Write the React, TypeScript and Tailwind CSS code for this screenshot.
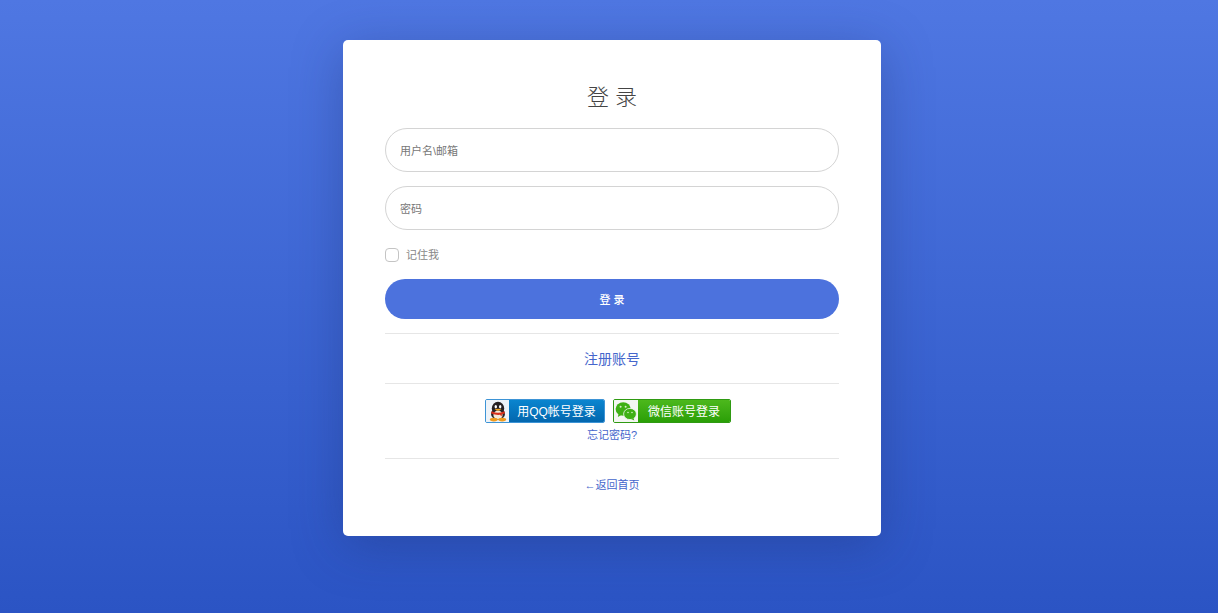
const cjk = "font-['Liberation_Sans','Noto_Sans_CJK_SC',sans-serif]";

function QQIcon() {
  return (
    <svg width="22" height="21" viewBox="0 0 22 21">
      <ellipse cx="11" cy="7.5" rx="6.2" ry="6.8" fill="#262022" />
      <ellipse cx="11" cy="13" rx="7" ry="5.8" fill="#2a2426" />
      <ellipse cx="11" cy="14" rx="4.6" ry="4.4" fill="#f3ead8" />
      <ellipse cx="8.8" cy="5.8" rx="1.2" ry="1.7" fill="#fff" />
      <ellipse cx="13.2" cy="5.8" rx="1.2" ry="1.7" fill="#fff" />
      <path d="M7.5 8.6q3.5-1.8 7 0-3.5 2.2-7 0z" fill="#f0a21e" />
      <path d="M4.6 10.2q6.4 3.2 12.8 0l.5 2.4-3 .7-.3 2.2-1.7-1.7q-3.6.5-8.8-1.2z" fill="#d8301c" />
      <ellipse cx="6.8" cy="18.6" rx="4" ry="1.8" fill="#ef9a1c" />
      <ellipse cx="15.2" cy="18.6" rx="4" ry="1.8" fill="#ef9a1c" />
    </svg>
  );
}

function WeChatIcon() {
  return (
    <svg width="22" height="20" viewBox="0 0 22 20">
      <ellipse cx="8.2" cy="8" rx="7.6" ry="6.8" fill="#3fb015" />
      <path d="M3.5 12.5l-.6 3.5 3.8-2.2z" fill="#3fb015" />
      <ellipse cx="15" cy="13" rx="6.4" ry="5.6" fill="#3fb015" stroke="#f4f6f2" strokeWidth="0.8" />
      <path d="M18.5 17l.8 2.6-3.2-1.6z" fill="#3fb015" />
      <circle cx="5.6" cy="5.8" r="1" fill="#d6efc8" />
      <circle cx="10.6" cy="5.8" r="1" fill="#d6efc8" />
      <circle cx="13" cy="11.5" r="0.8" fill="#d6efc8" />
      <circle cx="17" cy="11.5" r="0.8" fill="#d6efc8" />
    </svg>
  );
}

export default function App() {
  return (
    <div className={`${cjk} h-[613px] overflow-hidden bg-gradient-to-b from-[#4f77e2] to-[#2b54c4] pl-[6px] pt-10`}>
      <div className="mx-auto flex h-[496px] w-[538px] flex-col rounded-[5px] bg-white px-[42px] pt-[41px] shadow-[0_10px_50px_rgba(30,45,110,0.35)]">
        <h1 className="h-[33px] text-center text-[22px] font-light leading-[33px] text-[#444]">登 录</h1>
        <input
          placeholder="用户名\邮箱"
          className="mt-[14px] h-[44px] w-full rounded-full border border-[#d4d4d4] bg-white px-[14px] pt-[2px] text-[11px] text-[#333] outline-none placeholder:text-[#777]"
        />
        <input
          placeholder="密码"
          className="mt-[14px] h-[44px] w-full rounded-full border border-[#d4d4d4] bg-white px-[14px] pt-[2px] text-[11px] text-[#333] outline-none placeholder:text-[#777]"
        />
        <label className="mt-[18px] flex h-[14px] items-center gap-[7px] text-[11px] text-[#888]">
          <span className="h-[14px] w-[14px] rounded-[4px] border border-[#c4c4c4] bg-white" />
          记住我
        </label>
        <button className="mt-[17px] h-[40px] w-full rounded-full bg-[#4c72dd] pt-[2px] text-[11px] font-medium text-white">登 录</button>
        <div className="mt-[14px] border-t border-[#e6e6e6]" />
        <a className="h-[49px] text-center text-[14px] leading-[50px] text-[#4566cc]">注册账号</a>
        <div className="border-t border-[#e6e6e6]" />
        <div className="mt-[15px] flex justify-center gap-2 pr-[8px]">
          <div className="flex h-[24px] w-[120px] overflow-hidden rounded-[2px] border border-[#3d94d6]">
            <div className="flex w-[23px] items-center justify-center bg-[#eef3f8]"><QQIcon /></div>
            <div className="flex-1 bg-gradient-to-b from-[#0a85cf] to-[#0467ae] text-center text-[12px] leading-[24px] text-white">用QQ帐号登录</div>
          </div>
          <div className="flex h-[24px] w-[118px] overflow-hidden rounded-[2px] border border-[#2f9a12]">
            <div className="flex w-[24px] items-center justify-center bg-[#f4f6f2]"><WeChatIcon /></div>
            <div className="flex-1 bg-gradient-to-b from-[#4cb81c] to-[#2a9f06] text-center text-[12px] leading-[24px] text-white">微信账号登录</div>
          </div>
        </div>
        <a className="mt-[4px] h-[16px] text-center text-[11px] leading-[16px] text-[#4566cc]">忘记密码?</a>
        <div className="mt-[15px] border-t border-[#e6e6e6]" />
        <a className="mt-[18px] text-center text-[11px] leading-[16px] text-[#4566cc]">←返回首页</a>
      </div>
    </div>
  );
}
